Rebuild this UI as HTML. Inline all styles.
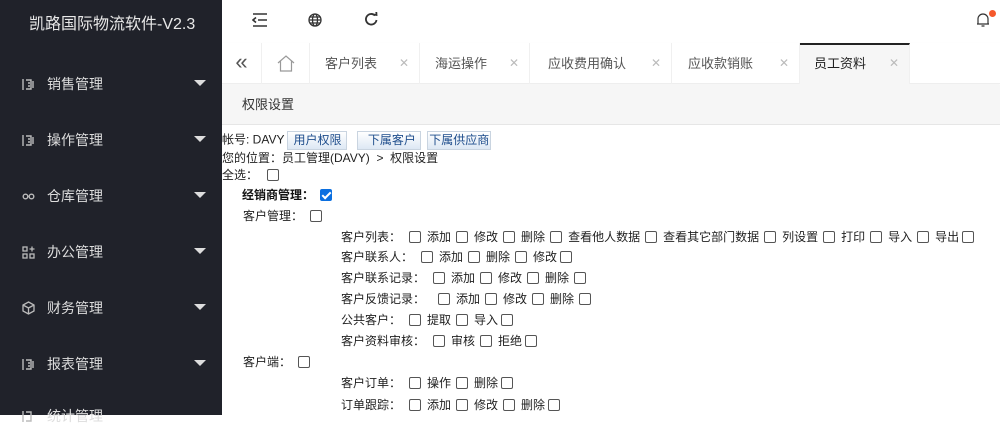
<!DOCTYPE html>
<html><head><meta charset="utf-8"><style>
*{margin:0;padding:0;box-sizing:border-box}
body{width:1000px;height:415px;overflow:hidden;font-family:"Liberation Sans","Noto Sans CJK SC",sans-serif;background:#fff;position:relative;color:#333}
.side{position:absolute;left:0;top:0;width:222px;height:415px;background:#20222a}
.logo{position:absolute;left:29px;top:10px;color:#e8e8e8;font-size:16px}
.mi{position:absolute;left:22px;color:#ddd;font-size:14px;display:flex;align-items:center}
.mi svg{margin-right:12px}
.mi .ar{position:absolute;left:172px;top:6px;width:0;height:0;border-left:6px solid transparent;border-right:6px solid transparent;border-top:6px solid #ddd}
.hdr{position:absolute;left:222px;top:0;right:0;height:43px;background:#fff}
.tabs{position:absolute;left:222px;top:43px;right:0;height:41px;background:#fff;border-bottom:1px solid #eee;box-shadow:0 1px 2px rgba(0,0,0,.06)}
.tab{position:absolute;top:0;height:41px;border-right:1px solid #f0f0f0;font-size:13px;color:#555;line-height:41px}
.tab .x{position:absolute;right:10px;top:0;color:#bbb;font-size:12px}
.bar{position:absolute;left:222px;top:85px;right:0;height:40px;background:#f6f6f6;font-size:13px;line-height:40px;padding-left:20px;color:#333;border-bottom:1px solid #e6e6e6}
.r{position:absolute;font-size:12px;color:#222;white-space:nowrap;line-height:14px}
.cb{display:inline-block;width:12px;height:12px;border:1px solid #555;border-radius:2px;vertical-align:-2px;margin:0 6px 0 5px;background:#fff}
.cb.on{background:#0b6fe0;border-color:#0b6fe0;position:relative}
.cb.on:after{content:"";position:absolute;left:3px;top:0px;width:3px;height:7px;border:solid #fff;border-width:0 2px 2px 0;transform:rotate(45deg)}
.btn{display:inline-block;height:19px;line-height:17px;padding:0 5px;border:1px solid #c9d4e0;background:linear-gradient(#fff,#dde8f4);color:#1e4d8c;font-size:12px;vertical-align:middle;margin-left:3px}
</style></head><body>
<div class="side">
<div class="logo">凯路国际物流软件-V2.3</div>
<div class="mi" style="top:74px"><svg width="13" height="13" viewBox="0 0 13 13" fill="none" stroke="#bbb" stroke-width="1.4"><path d="M1 1V12M4 2H9V11H4M6 5H8M6 8H8M11 3V10"/></svg>销售管理<span class="ar"></span></div>
<div class="mi" style="top:130px"><svg width="13" height="13" viewBox="0 0 13 13" fill="none" stroke="#bbb" stroke-width="1.4"><path d="M1 1V12M4 2H9V11H4M6 5H8M6 8H8M11 3V10"/></svg>操作管理<span class="ar"></span></div>
<div class="mi" style="top:186px"><svg width="13" height="13" viewBox="0 0 13 13" fill="none" stroke="#bbb" stroke-width="1.4"><circle cx="3.5" cy="6.5" r="2.3"/><circle cx="9.5" cy="6.5" r="2.3"/></svg>仓库管理<span class="ar"></span></div>
<div class="mi" style="top:242px"><svg width="13" height="13" viewBox="0 0 13 13" fill="none" stroke="#bbb" stroke-width="1.3"><rect x="1" y="1" width="4" height="4"/><rect x="1" y="8" width="4" height="4"/><rect x="8" y="8" width="4" height="4"/><path d="M10 0.5V5.5M7.5 3H12.5"/></svg>办公管理<span class="ar"></span></div>
<div class="mi" style="top:298px"><svg width="13" height="14" viewBox="0 0 13 14" fill="none" stroke="#bbb" stroke-width="1.3"><path d="M6.5 1L12 4V10L6.5 13L1 10V4ZM1 4L6.5 7L12 4M6.5 7V13"/></svg>财务管理<span class="ar"></span></div>
<div class="mi" style="top:354px"><svg width="13" height="13" viewBox="0 0 13 13" fill="none" stroke="#bbb" stroke-width="1.4"><path d="M1 1V12M4 2H9V11H4M6 5H8M6 8H8M11 3V10"/></svg>报表管理<span class="ar"></span></div>
<div class="mi" style="top:406px"><svg width="13" height="13" viewBox="0 0 13 13" fill="none" stroke="#bbb" stroke-width="1.4"><path d="M1 1V12M4 2H9V11H4"/></svg>统计管理</div>
</div>
<div class="hdr">
<svg style="position:absolute;left:30px;top:13px" width="16" height="14" viewBox="0 0 16 14" fill="none" stroke="#333" stroke-width="1.6"><path d="M1 1H15M6 7H15M1 13H15M4 4.5L1 7L4 9.5"/></svg>
<svg style="position:absolute;left:86px;top:13px" width="14" height="14" viewBox="0 0 14 14" fill="none" stroke="#333" stroke-width="1.3"><circle cx="7" cy="7" r="6"/><ellipse cx="7" cy="7" rx="2.5" ry="6"/><path d="M1 7H13M2 4H12M2 10H12"/></svg>
<svg style="position:absolute;left:142px;top:12px" width="15" height="15" viewBox="0 0 15 15" fill="none" stroke="#333" stroke-width="1.8"><path d="M12.5 8A5.3 5.3 0 1 1 11 3.5"/><path d="M9 2.5L12.5 3L12.3 0" /></svg>
<svg style="position:absolute;left:754px;top:12px" width="14" height="16" viewBox="0 0 14 16" fill="none" stroke="#333" stroke-width="1.2"><path d="M2 12V7A5 5 0 0 1 12 7V12H1H13M5.5 14H8.5"/></svg>
<span style="position:absolute;left:767px;top:10px;width:7px;height:7px;border-radius:50%;background:#f5582b"></span>
</div>
<div class="tabs">
<div class="tab" style="left:0;width:40px;text-align:center;font-size:22px;color:#555;line-height:38px">«</div>
<div class="tab" style="left:40px;width:48px"><svg style="position:absolute;left:15px;top:12px" width="18" height="17" viewBox="0 0 18 17" fill="none" stroke="#999" stroke-width="1.2"><path d="M1 8L9 1L17 8M3.5 6V16H14.5V6"/></svg></div>
<div class="tab" style="left:88px;width:110px;padding-left:15px">客户列表<span class="x">✕</span></div>
<div class="tab" style="left:198px;width:110px;padding-left:15px">海运操作<span class="x">✕</span></div>
<div class="tab" style="left:308px;width:142px;padding-left:18px">应收费用确认<span class="x">✕</span></div>
<div class="tab" style="left:450px;width:128px;padding-left:16px">应收款销账<span class="x">✕</span></div>
<div class="tab" style="left:578px;width:110px;padding-left:14px;background:#f6f6f6;color:#222;border-top:2px solid #222;line-height:37px">员工资料<span class="x">✕</span></div>
</div>
<div class="bar">权限设置</div>
<div class="r" style="left:222px;top:131px">帐号: DAVY<span class="btn">用户权限</span> <span class="btn" style="margin-left:6px;padding:0 4px 0 10px">下属客户</span> <span class="btn" style="margin-left:3px;padding:0 1px">下属供应商</span></div>
<div class="r" style="left:222px;top:151px">您的位置：员工管理(DAVY) &nbsp;&gt;&nbsp; 权限设置</div>
<div class="r" style="left:222px;top:168px">全选：<span class="cb" style="margin-left:9px"></span></div>
<div class="r" style="left:242px;top:188px;font-weight:bold;color:#111">经销商管理：<span class="cb on" style="margin-left:6px"></span></div>
<div class="r" style="left:243px;top:209px">客户管理：<span class="cb" style="margin-left:7px"></span></div>
<div class="r" style="left:341px;top:230px">客户列表：<span class="cb" style="margin-left:8px"></span>添加<span class="cb"></span>修改<span class="cb"></span>删除<span class="cb"></span>查看他人数据<span class="cb"></span>查看其它部门数据<span class="cb"></span>列设置<span class="cb"></span>打印<span class="cb"></span>导入<span class="cb"></span>导出<span class="cb" style="margin-left:3px"></span></div>
<div class="r" style="left:341px;top:250px">客户联系人：<span class="cb" style="margin-left:8px"></span>添加<span class="cb"></span>删除<span class="cb"></span>修改<span class="cb" style="margin-left:3px"></span></div>
<div class="r" style="left:341px;top:271px">客户联系记录：<span class="cb" style="margin-left:8px"></span>添加<span class="cb"></span>修改<span class="cb"></span>删除<span class="cb"></span></div>
<div class="r" style="left:341px;top:292px">客户反馈记录：<span class="cb" style="margin-left:13px"></span>添加<span class="cb"></span>修改<span class="cb"></span>删除<span class="cb"></span></div>
<div class="r" style="left:341px;top:313px">公共客户：<span class="cb" style="margin-left:8px"></span>提取<span class="cb"></span>导入<span class="cb" style="margin-left:3px"></span></div>
<div class="r" style="left:341px;top:334px">客户资料审核：<span class="cb" style="margin-left:8px"></span>审核<span class="cb"></span>拒绝<span class="cb" style="margin-left:3px"></span></div>
<div class="r" style="left:243px;top:355px">客户端：<span class="cb" style="margin-left:7px"></span></div>
<div class="r" style="left:341px;top:376px">客户订单：<span class="cb" style="margin-left:8px"></span>操作<span class="cb"></span>删除<span class="cb" style="margin-left:3px"></span></div>
<div class="r" style="left:341px;top:398px">订单跟踪：<span class="cb" style="margin-left:8px"></span>添加<span class="cb"></span>修改<span class="cb"></span>删除<span class="cb" style="margin-left:3px"></span></div>
</body></html>
